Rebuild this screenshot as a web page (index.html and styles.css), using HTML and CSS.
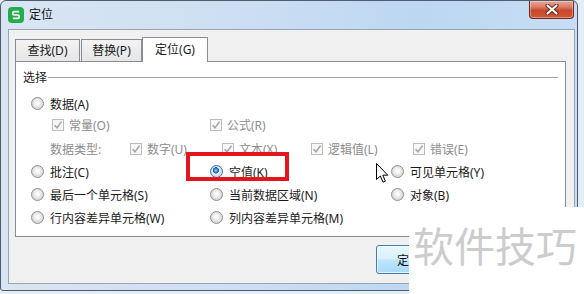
FILE: index.html
```html
<!DOCTYPE html>
<html lang="zh-CN">
<head>
<meta charset="utf-8">
<title>定位</title>
<link rel="stylesheet" href="styles.css">
</head>
<body>
<div class="window">
  <div class="titlebar">
    <div class="app-icon">
      <svg width="16" height="16" viewBox="0 0 16 16"><rect x="0" y="0" width="16" height="16" rx="4" fill="#22ad4c"/><path d="M11.2 4.6H6.3Q4.8 4.6 4.8 6.1V6.6Q4.8 8 6.3 8H9.7Q11.2 8 11.2 9.5V10Q11.2 11.4 9.7 11.4H4.8" fill="none" stroke="#fff" stroke-width="1.7"/></svg>
    </div>
    <span class="title">定位</span>
    <div class="close">
      <svg width="14" height="11" viewBox="0 0 14 11"><path d="M2.5 1.5L11.5 9.5M11.5 1.5L2.5 9.5" stroke="#5a2418" stroke-width="4" stroke-linecap="round"/><path d="M2.5 1.5L11.5 9.5M11.5 1.5L2.5 9.5" stroke="#ffffff" stroke-width="2.2" stroke-linecap="round"/></svg>
    </div>
  </div>
  <div class="client">
    <div class="tabs">
      <div class="tab t1">查找(D)</div>
      <div class="tab t2">替换(P)</div>
      <div class="tab active">定位(G)</div>
    </div>
    <div class="panel">
      <div class="group-title"><span>选择</span><div class="rule"></div></div>
      <div class="rows">
        <div class="row radios first">
          <label class="opt c1"><span class="radio"></span>数据(A)</label>
        </div>
        <div class="row checks1">
          <label class="chk w158"><span class="box"><svg width="12" height="12" viewBox="0 0 12 12"><path d="M2.6 6.2L5 8.8L9.6 2.6" fill="none" stroke="#a4a4a4" stroke-width="1.5"/></svg></span>常量(O)</label>
          <label class="chk"><span class="box"><svg width="12" height="12" viewBox="0 0 12 12"><path d="M2.6 6.2L5 8.8L9.6 2.6" fill="none" stroke="#a4a4a4" stroke-width="1.5"/></svg></span>公式(R)</label>
        </div>
        <div class="row checks2">
          <span class="dtype">数据类型:</span>
          <label class="chk w92"><span class="box"><svg width="12" height="12" viewBox="0 0 12 12"><path d="M2.6 6.2L5 8.8L9.6 2.6" fill="none" stroke="#a4a4a4" stroke-width="1.5"/></svg></span>数字(U)</label>
          <label class="chk w89"><span class="box"><svg width="12" height="12" viewBox="0 0 12 12"><path d="M2.6 6.2L5 8.8L9.6 2.6" fill="none" stroke="#a4a4a4" stroke-width="1.5"/></svg></span>文本(X)</label>
          <label class="chk w102"><span class="box"><svg width="12" height="12" viewBox="0 0 12 12"><path d="M2.6 6.2L5 8.8L9.6 2.6" fill="none" stroke="#a4a4a4" stroke-width="1.5"/></svg></span>逻辑值(L)</label>
          <label class="chk"><span class="box"><svg width="12" height="12" viewBox="0 0 12 12"><path d="M2.6 6.2L5 8.8L9.6 2.6" fill="none" stroke="#a4a4a4" stroke-width="1.5"/></svg></span>错误(E)</label>
        </div>
        <div class="row radios">
          <label class="opt c1"><span class="radio"></span>批注(C)</label>
          <label class="opt c2"><span class="radio checked"></span>空值(K)</label>
          <label class="opt"><span class="radio"></span>可见单元格(Y)</label>
        </div>
        <div class="row radios">
          <label class="opt c1"><span class="radio"></span>最后一个单元格(S)</label>
          <label class="opt c2"><span class="radio"></span>当前数据区域(N)</label>
          <label class="opt"><span class="radio"></span>对象(B)</label>
        </div>
        <div class="row radios">
          <label class="opt c1"><span class="radio"></span>行内容差异单元格(W)</label>
          <label class="opt c2"><span class="radio"></span>列内容差异单元格(M)</label>
        </div>
      </div>
    </div>
    <div class="footer">
      <button class="btn default">定</button>
    </div>
  </div>
</div>

<div class="highlight"></div>
<svg class="cursor" width="13" height="20" viewBox="0 0 13 20"><path d="M0.5 0.5V16.5L4.3 13L7 19.2L9.4 18.2L6.8 12.2H11.8Z" fill="#fff" stroke="#000" stroke-width="1" stroke-linejoin="round"/></svg>
<div class="watermark">软件技巧</div>
</body>
</html>
```
FILE: styles.css
```css
* { box-sizing: border-box; }
html, body { margin: 0; padding: 0; }
body {
  width: 584px;
  height: 294px;
  overflow: hidden;
  position: relative;
  background: #e4ecf5;
  font-family: "Noto Sans", "Noto Sans CJK SC", sans-serif;
  font-size: 12px;
  color: #1b1b1b;
}
.window {
  width: 578px;
  height: 291px;
  border: 1px solid #4e5d6c;
  border-radius: 6px 6px 3px 3px;
  background: linear-gradient(to right, #d9e5f2 0%, #cddff3 40%, #bdd7f2 72%, #c6ddf5 100%);
  display: flex;
  flex-direction: column;
}
.titlebar {
  height: 28px;
  flex: none;
  display: flex;
  align-items: center;
  padding-left: 7px;
}
.app-icon { width: 16px; height: 16px; display: flex; }
.title { margin-left: 5px; line-height: 16px; color: #111; }
.close {
  margin-left: auto;
  margin-right: 3px;
  align-self: flex-start;
  width: 45px;
  height: 18px;
  border: 1px solid #6f2a1e;
  border-top: none;
  border-radius: 0 0 4px 4px;
  background: linear-gradient(#e9a898 0%, #dc7c68 35%, #c9462d 55%, #cf5a34 100%);
  box-shadow: inset 0 0 0 1px rgba(255,255,255,0.35);
  display: flex;
  align-items: center;
  justify-content: center;
}
.client {
  height: 255px;
  flex: none;
  margin: 0 2px 0 7px;
  border: 1px solid #9aa4b0;
  background: #f0f0f0;
  padding: 7px 0 0 6px;
  display: flex;
  flex-direction: column;
}
.tabs {
  height: 24px;
  display: flex;
  align-items: flex-start;
}
.tab {
  height: 22px;
  margin-top: 2px;
  border: 1px solid #898c95;
  border-bottom: none;
  background: linear-gradient(#f3f3f3, #e6e6e6);
  line-height: 21px;
  text-align: center;
  color: #1b1b1b;
}
.t1 { width: 65px; margin-right: 1px; }
.t2 { width: 61px; }
.tab.active {
  width: 66px;
  height: 25px;
  margin-top: 0;
  background: #fff;
  line-height: 24px;
  position: relative;
  z-index: 1;
}
.panel {
  width: 551px;
  height: 176px;
  flex: none;
  border: 1px solid #898c95;
  background: #fff;
  padding: 8px 7px 0 7px;
}
.group-title {
  height: 16px;
  display: flex;
  align-items: center;
  line-height: 16px;
}
.group-title span { flex: none; }
.rule {
  flex: 1;
  height: 1px;
  margin-left: 1px;
  margin-top: -1px;
  background: #a5a5a5;
}
.rows {
  margin-top: 7px;
  display: flex;
  flex-direction: column;
  gap: 2px;
}
.row {
  height: 21px;
  display: flex;
  align-items: center;
  white-space: nowrap;
}
.row.first { margin-bottom: -2px; }
.checks1 { margin-bottom: 1px; }
.radios { padding-left: 8px; }
.opt { display: flex; align-items: center; }
.c1 { width: 179px; }
.c2 { width: 181px; }
.radio {
  width: 13px;
  height: 13px;
  flex: none;
  margin-right: 6px;
  border-radius: 50%;
  border: 1px solid #8e8f8f;
  background: radial-gradient(circle at 50% 45%, #ffffff 0, #f3f3f3 30%, #d9d9d9 65%, #ececec 100%);
}
.radio.checked {
  border-color: #3c6ea8;
  background:
    radial-gradient(circle at 45% 40%, #a6dbfb 0, #3d8bd6 1.6px, #1f5aa3 3px, rgba(0,0,0,0) 3.3px),
    radial-gradient(circle at 50% 45%, #ffffff 0, #eef6fc 30%, #c8dcef 65%, #e6eff8 100%);
}
.checks1 { padding-left: 29px; }
.checks2 { padding-left: 27px; }
.chk { display: flex; align-items: center; color: #8d8d8d; }
.box {
  width: 12px;
  height: 12px;
  flex: none;
  margin-right: 5px;
  border: 1px solid #bdbdbd;
  background: #f7f7f7;
  display: flex;
}
.box svg { margin: -1px; }
.w158 { width: 158px; }
.w92 { width: 92px; }
.w89 { width: 89px; }
.w102 { width: 102px; }
.dtype { width: 80px; color: #8d8d8d; }
.footer {
  display: flex;
  padding-left: 361px;
  padding-top: 8px;
}
.btn {
  width: 86px;
  height: 29px;
  border: 1px solid #3c7fb1;
  border-radius: 3px;
  background: linear-gradient(#eaf6fd 0%, #d9f0fc 48%, #bee6fd 52%, #a7d9f5 100%);
  box-shadow: inset 0 0 0 1px rgba(255,255,255,0.7);
  font-family: "Noto Sans", "Noto Sans CJK SC", sans-serif;
  font-size: 12px;
  color: #111;
  padding: 0 0 0 20px;
  text-align: left;
}
.highlight {
  position: absolute;
  left: 186px;
  top: 152px;
  width: 103px;
  height: 29px;
  border: 4px solid #e3161e;
}
.cursor {
  position: absolute;
  left: 376px;
  top: 163px;
}
.watermark {
  position: absolute;
  left: 409px;
  top: 207px;
  right: 0;
  bottom: 0;
  background: #fff;
  padding: 17px 0 0 4px;
  font-family: "Noto Sans CJK SC", sans-serif;
  font-size: 41px;
  line-height: 41px;
  color: #cccccc;
  white-space: nowrap;
}
```
